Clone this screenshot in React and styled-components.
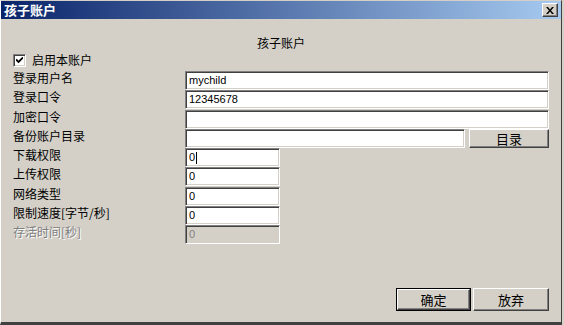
import React from 'react';
import styled, { createGlobalStyle } from 'styled-components';

const GlobalStyle = createGlobalStyle`
  html, body {
    margin: 0;
    padding: 0;
    background: #d4d0c8;
  }
  body {
    font-family: "Noto Sans CJK SC", "Liberation Sans", sans-serif;
    font-size: 12px;
    color: #000;
  }
`;

const Window = styled.div`
  box-sizing: border-box;
  width: 562px;
  height: 325px;
  background: #d4d0c8;
  border-top: 1px solid #d4d0c8;
  border-left: 1px solid #ffffff;
  border-right: 1px solid #404040;
  border-bottom: 3px solid #404040;
  display: flex;
  flex-direction: column;
`;

const TitleBar = styled.div`
  height: 18px;
  display: flex;
  align-items: center;
  justify-content: space-between;
  padding: 0 3px 0 3px;
  background: linear-gradient(to right, #0a246a, #a6caf0);
`;

const Title = styled.span`
  color: #fff;
  font-weight: bold;
  font-size: 13px;
  line-height: 18px;
`;

const CloseButton = styled.div`
  box-sizing: border-box;
  width: 16px;
  height: 14px;
  background: #d4d0c8;
  border-top: 1px solid #fff;
  border-left: 1px solid #fff;
  border-right: 1px solid #404040;
  border-bottom: 1px solid #404040;
  box-shadow: inset -1px -1px 0 #808080;
  display: flex;
  align-items: center;
  justify-content: center;
`;

const Body = styled.div`
  flex: 1;
  display: flex;
  flex-direction: column;
  padding: 16px 12px 11px 12px;
`;

const Heading = styled.div`
  text-align: center;
  line-height: 16px;
  margin-right: -12px;
  margin-left: -12px;
`;

const CheckRow = styled.label`
  display: flex;
  align-items: center;
  gap: 6px;
  line-height: 16px;
  height: 16px;
  margin-top: 1px;
`;

const CheckBox = styled.span`
  box-sizing: border-box;
  width: 13px;
  height: 13px;
  background: #fff;
  border-top: 1px solid #808080;
  border-left: 1px solid #808080;
  border-right: 1px solid #fff;
  border-bottom: 1px solid #fff;
  box-shadow: inset 1px 1px 0 #404040, inset -1px -1px 0 #d4d0c8;
  display: flex;
  align-items: center;
  justify-content: center;
`;

const Form = styled.div`
  display: grid;
  grid-template-columns: 172px 1fr;
  grid-auto-rows: 19px;
  row-gap: 0.3px;
  margin-top: 3px;
`;

const Label = styled.span`
  line-height: 14px;
  color: ${(p) => (p.$disabled ? '#808080' : '#000')};
  text-shadow: ${(p) => (p.$disabled ? '1px 1px 0 #fff' : 'none')};
`;

const Field = styled.div`
  display: flex;
  gap: 4px;
`;

const Input = styled.div`
  box-sizing: border-box;
  width: ${(p) => p.$width || '100%'};
  height: 19px;
  background: ${(p) => (p.$disabled ? '#d4d0c8' : '#fff')};
  color: ${(p) => (p.$disabled ? '#808080' : '#000')};
  border-top: 1px solid #808080;
  border-left: 1px solid #808080;
  border-right: 1px solid #fff;
  border-bottom: 1px solid #fff;
  box-shadow: inset 1px 1px 0 #404040, inset -1px -1px 0 #d4d0c8;
  padding: 0 3px;
  font-family: "Liberation Sans", "DejaVu Sans", sans-serif;
  font-size: 11px;
  line-height: 17px;
  display: flex;
  align-items: center;
  white-space: nowrap;
  ${(p) => (p.$grow ? 'flex: 1;' : '')}
`;

const Caret = styled.span`
  display: inline-block;
  width: 1px;
  height: 12px;
  background: #000;
  margin-left: 1px;
`;

const Button = styled.div`
  box-sizing: border-box;
  width: ${(p) => p.$width};
  height: ${(p) => p.$height || '19px'};
  background: #d4d0c8;
  border-top: 1px solid #fff;
  border-left: 1px solid #fff;
  border-right: 1px solid #404040;
  border-bottom: 1px solid #404040;
  box-shadow: inset -1px -1px 0 #808080;
  display: flex;
  align-items: center;
  justify-content: center;
  font-size: 13px;
`;

const Footer = styled.div`
  margin-top: auto;
  display: flex;
  justify-content: flex-end;
  gap: 2px;
`;

const DefaultFrame = styled.div`
  border: 1px solid #000;
  display: flex;
`;

const rows = [
  { label: '登录用户名', value: 'mychild' },
  { label: '登录口令', value: '12345678' },
  { label: '加密口令', value: '' },
];

const small = [
  { label: '下载权限', value: '0', caret: true },
  { label: '上传权限', value: '0' },
  { label: '网络类型', value: '0' },
  { label: '限制速度[字节/秒]', value: '0' },
  { label: '存活时间[秒]', value: '0', disabled: true },
];

const App = () => {
  return (
    <>
      <GlobalStyle />
      <Window>
        <TitleBar>
          <Title>孩子账户</Title>
          <CloseButton>
            <svg width="8" height="7" viewBox="0 0 8 7">
              <path d="M0 0h2l2 2.5L6 0h2L5 3.5 8 7H6L4 4.5 2 7H0l3-3.5z" fill="#000" />
            </svg>
          </CloseButton>
        </TitleBar>
        <Body>
          <Heading>孩子账户</Heading>
          <CheckRow>
            <CheckBox>
              <svg width="7" height="7" viewBox="0 0 7 7">
                <path d="M0 2.5l2.5 2.5L7 0.5" stroke="#000" strokeWidth="1.8" fill="none" />
              </svg>
            </CheckBox>
            启用本账户
          </CheckRow>
          <Form>
            {rows.map((r) => (
              <React.Fragment key={r.label}>
                <Label>{r.label}</Label>
                <Input>{r.value}</Input>
              </React.Fragment>
            ))}
            <Label>备份账户目录</Label>
            <Field>
              <Input $grow />
              <Button $width="80px">目录</Button>
            </Field>
            {small.map((r) => (
              <React.Fragment key={r.label}>
                <Label $disabled={r.disabled}>{r.label}</Label>
                <Input $width="95px" $disabled={r.disabled}>
                  {r.value}
                  {r.caret && <Caret />}
                </Input>
              </React.Fragment>
            ))}
          </Form>
          <Footer>
            <DefaultFrame>
              <Button $width="73px" $height="21px">确定</Button>
            </DefaultFrame>
            <Button $width="76px" $height="23px">放弃</Button>
          </Footer>
        </Body>
      </Window>
    </>
  );
};

export default App;
